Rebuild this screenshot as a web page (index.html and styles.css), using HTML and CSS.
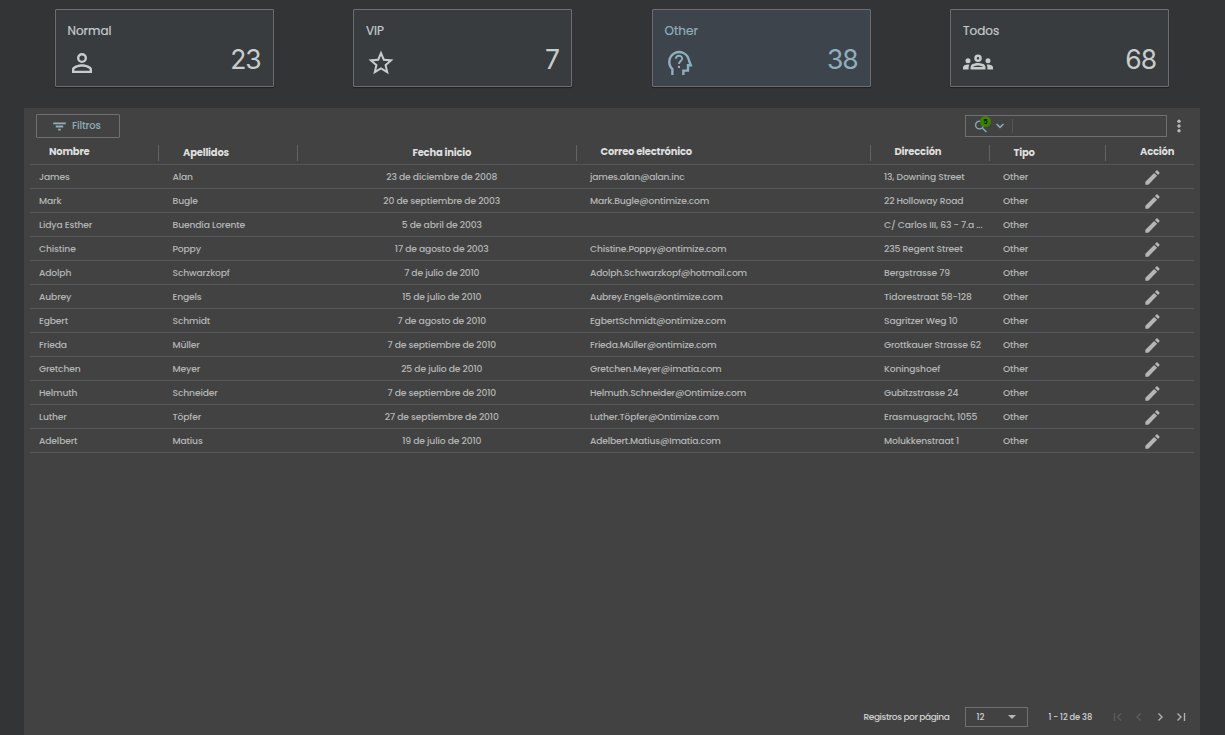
FILE: index.html
```html
<!DOCTYPE html>
<html lang="es">
<head>
<meta charset="utf-8">
<title>Clientes</title>
<link rel="stylesheet" href="styles.css">
</head>
<body>
<svg class="defs" width="0" height="0">
  <symbol id="pencil" viewBox="0 0 24 24"><path d="M3 17.25V21h3.750L17.810 9.940l-3.750-3.750L3 17.250zM20.710 7.040a1 1 0 0 0 0-1.410l-2.340-2.340a1 1 0 0 0-1.410 0l-1.830 1.830 3.750 3.750 1.830-1.830z"/></symbol>
</svg>
<main class="page">
  <section class="cards">
    <article class="card">
      <h2 class="card-title">Normal</h2>
      <div class="card-row">
        <svg class="card-icon" viewBox="0 0 24 24"><path d="M12 5.900a2.100 2.100 0 1 1 0 4.200 2.100 2.100 0 0 1 0-4.200m0 9c2.970 0 6.100 1.460 6.100 2.100v1.100H5.900V17c0-.64 3.130-2.100 6.100-2.100M12 4a4 4 0 1 0 0 8 4 4 0 0 0 0-8zm0 9c-2.670 0-8 1.340-8 4v3h16v-3c0-2.660-5.330-4-8-4z"/></svg>
        <span class="card-value">23</span>
      </div>
    </article>
    <article class="card">
      <h2 class="card-title">VIP</h2>
      <div class="card-row">
        <svg class="card-icon" viewBox="0 0 24 24"><path d="M22 9.240l-7.190-.62L12 2 9.190 8.630 2 9.240l5.460 4.730L5.820 21 12 17.270 18.180 21l-1.630-7.030L22 9.240zM12 15.400l-3.760 2.270 1-4.280-3.320-2.880 4.380-.38L12 6.100l1.710 4.040 4.380.38-3.320 2.880 1 4.280L12 15.400z"/></svg>
        <span class="card-value">7</span>
      </div>
    </article>
    <article class="card selected">
      <h2 class="card-title">Other</h2>
      <div class="card-row">
        <svg class="card-icon outline" viewBox="0 0 24 24"><path d="M6.700 21.500v-4.600A7.900 7.900 0 1 1 19.900 9.700l1.500 4.100h-2.200v4.300h-3.700v3.400" stroke-width="1.900"/><path d="M9.500 8.600c.2-3.300 5.200-3 5 0-.1 1.800-2.500 2-2.500 4.200" stroke-width="1.500"/><path d="M12 14.300v1.700" stroke-width="1.700"/></svg>
        <span class="card-value">38</span>
      </div>
    </article>
    <article class="card">
      <h2 class="card-title">Todos</h2>
      <div class="card-row">
        <svg class="card-icon group" viewBox="0 0 24 24"><path d="M4 13a2 2 0 1 0 0-4 2 2 0 0 0 0 4zm1.130 1.100A6.950 6.950 0 0 0 4 14c-.99 0-1.930.21-2.780.58A2.010 2.010 0 0 0 0 16.430V18h4.500v-1.610c0-.83.23-1.610.63-2.290zM20 13a2 2 0 1 0 0-4 2 2 0 0 0 0 4zm4 3.430c0-.81-.48-1.530-1.220-1.850A6.950 6.950 0 0 0 20 14c-.39 0-.76.04-1.130.1.400.68.630 1.460.630 2.290V18H24v-1.570zm-7.760-2.780A10.500 10.500 0 0 0 12 12.750c-1.630 0-3.070.39-4.240.9A2.990 2.990 0 0 0 6 16.390V18h12v-1.610c0-1.180-.68-2.260-1.760-2.740zM8.070 16c.09-.23.130-.39.910-.69a8.200 8.200 0 0 1 6.040 0c.77.300.81.460.91.690H8.070zM12 8a1 1 0 1 1 0 2 1 1 0 0 1 0-2m0-2a3 3 0 1 0 0 6 3 3 0 0 0 0-6z"/></svg>
        <span class="card-value">68</span>
      </div>
    </article>
  </section>

  <section class="panel">
    <div class="toolbar">
      <button class="filter"><svg viewBox="0 0 24 24" width="15" height="15"><path d="M10 18.500h4v-3h-4v3zM2 5.500v3h20v-3H2zm4 8h12v-3H6v3z"/></svg>Filtros</button>
      <div class="tools">
        <div class="search">
          <span class="search-icon"><svg class="outline" viewBox="0 0 14 14" width="14" height="14"><circle cx="5.500" cy="6" r="3.900"/><path d="M8.400 8.900l4 4"/></svg><span class="badge">5</span></span>
          <svg class="outline chevron" viewBox="0 0 10 6" width="10" height="6"><path d="M1.500 1l3.500 3.300L8.500 1"/></svg>
          <span class="search-rule"></span>
        </div>
        <svg class="more" viewBox="0 0 4 14" width="4" height="14"><circle cx="2" cy="2.200" r="1.700"/><circle cx="2" cy="7" r="1.700"/><circle cx="2" cy="11.800" r="1.700"/></svg>
      </div>
    </div>
    <div class="table">
      <div class="row head">
        <div class="name">Nombre</div><div class="surname low">Apellidos</div><div class="date low">Fecha inicio</div><div class="mail">Correo electrónico</div><div class="address">Dirección</div><div class="type low">Tipo</div><div class="action">Acción</div>
      </div>
      <div class="row"><span>James</span><span>Alan</span><span class="date">23 de diciembre de 2008</span><span class="mail">james.alan@alan.inc</span><span class="address">13, Downing Street</span><span>Other</span><svg class="edit"><use href="#pencil"/></svg></div>
      <div class="row"><span>Mark</span><span>Bugle</span><span class="date">20 de septiembre de 2003</span><span class="mail">Mark.Bugle@ontimize.com</span><span class="address">22 Holloway Road</span><span>Other</span><svg class="edit"><use href="#pencil"/></svg></div>
      <div class="row"><span>Lidya Esther</span><span>Buendía Lorente</span><span class="date">5 de abril de 2003</span><span class="mail"></span><span class="address">C/ Carlos III, 63 - 7.a ...</span><span>Other</span><svg class="edit"><use href="#pencil"/></svg></div>
      <div class="row"><span>Chistine</span><span>Poppy</span><span class="date">17 de agosto de 2003</span><span class="mail">Chistine.Poppy@ontimize.com</span><span class="address">235 Regent Street</span><span>Other</span><svg class="edit"><use href="#pencil"/></svg></div>
      <div class="row"><span>Adolph</span><span>Schwarzkopf</span><span class="date">7 de julio de 2010</span><span class="mail">Adolph.Schwarzkopf@hotmail.com</span><span class="address">Bergstrasse 79</span><span>Other</span><svg class="edit"><use href="#pencil"/></svg></div>
      <div class="row"><span>Aubrey</span><span>Engels</span><span class="date">15 de julio de 2010</span><span class="mail">Aubrey.Engels@ontimize.com</span><span class="address">Tidorestraat 58-128</span><span>Other</span><svg class="edit"><use href="#pencil"/></svg></div>
      <div class="row"><span>Egbert</span><span>Schmidt</span><span class="date">7 de agosto de 2010</span><span class="mail">EgbertSchmidt@ontimize.com</span><span class="address">Sagritzer Weg 10</span><span>Other</span><svg class="edit"><use href="#pencil"/></svg></div>
      <div class="row"><span>Frieda</span><span>Müller</span><span class="date">7 de septiembre de 2010</span><span class="mail">Frieda.Müller@ontimize.com</span><span class="address">Grottkauer Strasse 62</span><span>Other</span><svg class="edit"><use href="#pencil"/></svg></div>
      <div class="row"><span>Gretchen</span><span>Meyer</span><span class="date">25 de julio de 2010</span><span class="mail">Gretchen.Meyer@imatia.com</span><span class="address">Koningshoef</span><span>Other</span><svg class="edit"><use href="#pencil"/></svg></div>
      <div class="row"><span>Helmuth</span><span>Schneider</span><span class="date">7 de septiembre de 2010</span><span class="mail">Helmuth.Schneider@Ontimize.com</span><span class="address">Gubitzstrasse 24</span><span>Other</span><svg class="edit"><use href="#pencil"/></svg></div>
      <div class="row"><span>Luther</span><span>Töpfer</span><span class="date">27 de septiembre de 2010</span><span class="mail">Luther.Töpfer@Ontimize.com</span><span class="address">Erasmusgracht, 1055</span><span>Other</span><svg class="edit"><use href="#pencil"/></svg></div>
      <div class="row"><span>Adelbert</span><span>Matius</span><span class="date">19 de julio de 2010</span><span class="mail">Adelbert.Matius@Imatia.com</span><span class="address">Molukkenstraat 1</span><span>Other</span><svg class="edit"><use href="#pencil"/></svg></div>
    </div>
    <footer class="pager">
      <span class="per-page">Registros por página</span>
      <div class="select"><span>12</span><svg viewBox="0 0 8 4" width="8" height="4"><path d="M0 0h8L4 4z"/></svg></div>
      <span class="range">1 - 12 de 38</span>
      <nav class="arrows">
        <svg class="outline off" viewBox="0 0 10 10"><path d="M1.500 1v8M8 1.500L4.500 5 8 8.500"/></svg>
        <svg class="outline off" viewBox="0 0 10 10"><path d="M6.500 1.500L3 5l3.500 3.500"/></svg>
        <svg class="outline" viewBox="0 0 10 10"><path d="M3.500 1.500L7 5 3.500 8.500"/></svg>
        <svg class="outline" viewBox="0 0 10 10"><path d="M1.500 1.500L5 5 1.500 8.500M8.500 1v8"/></svg>
      </nav>
    </footer>
  </section>
</main>
</body>
</html>
```
FILE: styles.css
```css
* { box-sizing: border-box; }
body {
  margin: 0;
  background: #333436;
  color: #b4b6b6;
  font-family: Poppins, Inter, sans-serif;
  overflow: hidden;
}
svg { fill: currentColor; flex: none; display: block; }
.defs { position: absolute; }
.outline { fill: none; stroke: currentColor; stroke-width: 1.4; }
.page { height: 735px; display: flex; flex-direction: column; padding: 9px 25px 0 24px; }
.cards {
  display: grid;
  grid-template-columns: repeat(4, 219px);
  column-gap: 79.500px;
  padding-left: 30.500px;
  height: 99px;
  align-items: start;
}
.card {
  height: 78px;
  padding: 13px 12px 0;
  border: 1px solid #6c6e6f;
  border-radius: 1px;
  background: #383c3f;
  color: #c8cccb;
  box-shadow: 0 1px 1px #1f2021;
}
.selected { background: #3d444b; color: #8fafbd; }
.card-title { margin: 0; font-size: 12px; line-height: 16px; font-weight: 400; -webkit-text-stroke: .2px currentColor; }
.card-row { display: flex; justify-content: space-between; height: 40px; padding-top: 4px; }
.card-icon { width: 30px; height: 30px; margin: 5px 0 0 -.5px; }
.card-icon.group { margin: 4px 0 0; }
.card-value { font: 400 26.500px/32px Inter, sans-serif; letter-spacing: -1.100px; }

.panel { flex: 1; display: flex; flex-direction: column; background: #424242; padding: 6px 6px 8px; }
.toolbar { display: flex; justify-content: space-between; height: 30px; padding: 0 13px 0 6px; }
.filter {
  display: flex; align-items: center; gap: 5px;
  width: 84px; height: 24px; padding: 0 0 0 15px;
  border: 1px solid #6e7072; border-radius: 1px;
  background: none; color: #8fafbd;
  font: 500 10px Poppins, Inter, sans-serif; letter-spacing: -.15px;
}
.tools { display: flex; gap: 10px; padding-top: 1px; }
.search {
  display: flex; align-items: center;
  width: 202px; height: 22px; padding-left: 8px;
  border: 1px solid #6e7072; color: #8aa9b8;
}
.search-icon { position: relative; }
.badge {
  position: absolute; left: 6px; top: -3px;
  width: 11px; height: 11px; border-radius: 50%;
  background: #3a8500; color: #111;
  font-size: 7px; line-height: 11px; font-weight: 600; text-align: center;
}
.chevron { margin-left: 6.500px; stroke-width: 1.600; }
.search-rule { width: 1px; height: 14px; margin-left: 7.500px; background: #555; }
.more { margin-top: 4px; color: #b8b9b9; }

.table { flex: 1; }
.row {
  display: grid;
  grid-template-columns: 133.500px 139px 278.500px 294px 119px 117px 83px;
  height: 24px;
  border-bottom: 1px solid #555656;
  line-height: 24px;
  font-size: 9.200px;
  font-weight: 500;
  letter-spacing: -.15px;
}
.row > span { padding-left: 9px; white-space: nowrap; }
.row > .date { padding: 0; text-align: center; }
.row > .mail { letter-spacing: -.19px; }
.head { height: 21px; line-height: 16px; font-weight: 700; font-size: 10px; letter-spacing: -.22px; color: #dedfdf; }
.head > div { position: relative; }
.head > .low { line-height: 18px; }
.head > .mail { letter-spacing: -.22px; }
.head > div:not(.action)::after {
  content: ""; position: absolute; right: 5px; top: 1px;
  width: 1px; height: 16px; background: #626363;
}
.head > .date::after, .head > .mail::after, .head > .address::after { right: 4px !important; }
.head .name, .head .surname, .head .mail, .head .address, .head .type { padding-left: 19.500px; }
.head .name { padding-left: 19px; }
.head .action { padding-left: 29px; }
.edit { width: 19px; height: 19px; margin: 2.500px 0 0 32px; }

.pager { display: flex; align-items: center; height: 20px; color: #d0d1d1; font-size: 9px; font-weight: 500; padding-right: 8.500px; justify-content: flex-end; white-space: nowrap; }
.per-page { letter-spacing: -.43px; width: 86px; }
.select { display: flex; align-items: center; justify-content: space-between; width: 63px; height: 20px; margin-left: 15px; padding: 0 11px; border: 1px solid #6e7072; font-size: 8.500px; }
.select svg { color: #b5b6b6; }
.range { width: 45px; margin-left: 21px; font-size: 8.300px; letter-spacing: -.12px; }
.arrows { display: flex; gap: 11px; margin-left: 19px; color: #b0b1b1; }
.arrows svg { width: 10px; height: 10px; }
.arrows .off { color: #5c5c5c; }
```
